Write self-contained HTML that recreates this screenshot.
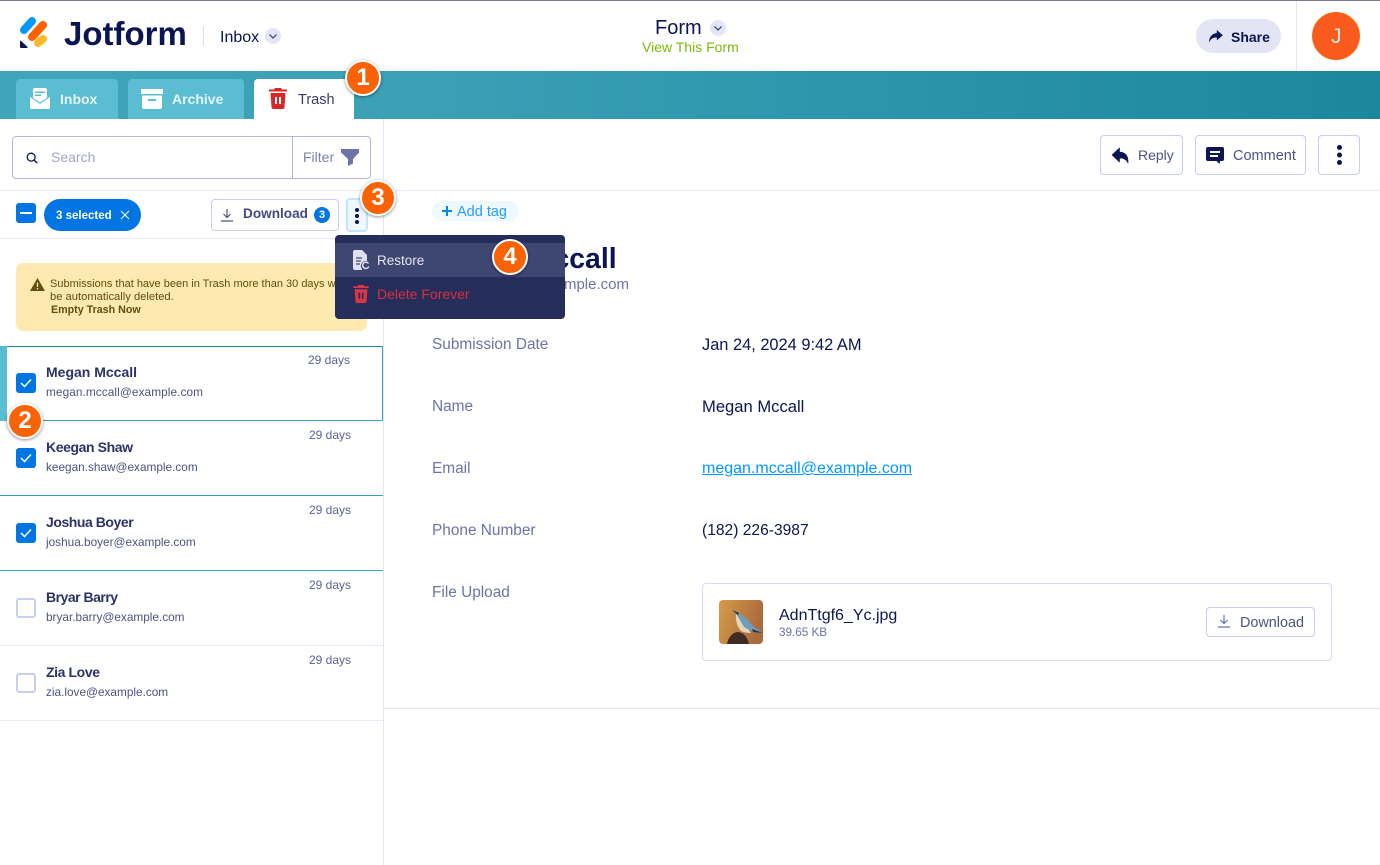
<!DOCTYPE html>
<html><head><meta charset="utf-8"><style>
*{box-sizing:border-box}
html,body{margin:0;padding:0;width:1380px;height:865px;overflow:hidden;background:#fff;font-family:"Liberation Sans",sans-serif;color:#0a1551}
.a{position:absolute}
.t{position:absolute;white-space:nowrap;line-height:1}
.badge{position:absolute;width:36px;height:36px;border-radius:50%;background:#f96205;border:2px solid #fff;box-shadow:0 1px 3px rgba(0,0,0,.45);color:#fff;font-size:24px;font-weight:bold;line-height:32px;text-align:center;z-index:20}
.cb{position:absolute;left:16px;width:20px;height:20px;border-radius:3px;background:#0075e3}
.cbe{position:absolute;left:16px;width:20px;height:20px;border-radius:3px;background:#fff;border:2px solid #c8ceed}
.name{position:absolute;left:46px;font-size:14px;font-weight:bold;color:#2b3366;white-space:nowrap;line-height:1}
.mail{position:absolute;left:46px;font-size:11.800px;color:#4c5381;white-space:nowrap;line-height:1}
.days{position:absolute;font-size:12px;color:#5b6394;white-space:nowrap;line-height:1}
.lab{position:absolute;left:432px;font-size:15.4px;color:#6c73a8;white-space:nowrap;line-height:1}
.val{position:absolute;left:702px;color:#0a1551;white-space:nowrap;line-height:1}
.btn{position:absolute;background:#fff;border:1px solid #c8ceed;border-radius:4px}
</style></head><body>
<div class="a" style="left:0;top:0;width:1380px;height:1px;background:#7a7890"></div>

<!-- logo -->
<svg class="a" style="left:16px;top:14px" width="36" height="36" viewBox="16 14 36 36">
<path d="M24 30L32 21" stroke="#0099ff" stroke-width="8" stroke-linecap="round"/>
<path d="M32 37L43 25" stroke="#ff6100" stroke-width="8" stroke-linecap="round"/>
<path d="M38 43L43 39" stroke="#ffb629" stroke-width="8" stroke-linecap="round"/>
<path d="M20 41.500Q20 40 21.200 41L27.500 47Q28 48 26.500 48H21Q20 48 20 47z" fill="#0a1551"/>
</svg>
<div class="t" style="left:64px;top:17px;font-size:33px;font-weight:bold;color:#0a1551">Jotform</div>
<div class="a" style="left:203px;top:26px;width:1px;height:20px;background:#dadef3"></div>
<div class="t" style="left:220px;top:30px;font-size:16px;color:#0a1551">Inbox</div>
<div class="a" style="left:265px;top:28px;width:16px;height:16px;border-radius:50%;background:#e3e5f5"></div>
<svg class="a" style="left:265px;top:28px" width="16" height="16"><path d="M4.500 6.500l3.500 3.500 3.500-3.500" fill="none" stroke="#343c6a" stroke-width="1.200"/></svg>

<div class="t" style="left:655px;top:18px;font-size:20px;color:#0a1551">Form</div>
<div class="a" style="left:710px;top:20px;width:16px;height:16px;border-radius:50%;background:#e3e5f5"></div>
<svg class="a" style="left:710px;top:20px" width="16" height="16"><path d="M4.500 6.500l3.500 3.500 3.500-3.500" fill="none" stroke="#343c6a" stroke-width="1.200"/></svg>
<div class="t" style="left:642px;top:40px;font-size:14px;color:#78bb07">View This Form</div>

<div class="a" style="left:1196px;top:19px;width:85px;height:34px;border-radius:17px;background:#e3e5f5"></div>
<svg class="a" style="left:1208px;top:30px" width="15" height="13" viewBox="0 0 17 15"><path d="M10 0l7 6-7 6V8.500C6 8.500 3 10 1 14.500 1 9 4 4 10 3.500z" fill="#0a1551"/></svg>
<div class="t" style="left:1231px;top:30px;font-size:14px;font-weight:bold;color:#0a1551">Share</div>
<div class="a" style="left:1296px;top:1px;width:1px;height:70px;background:#e3e5f5"></div>
<div class="a" style="left:1312px;top:12px;width:48px;height:48px;border-radius:50%;background:#fa5a1e;border:1px solid #ff6a10"></div>
<div class="t" style="left:1331px;top:26px;font-size:21px;color:#ffe9e0">J</div>

<!-- teal bar -->
<div class="a" style="left:0;top:71px;width:1380px;height:48px;background:linear-gradient(90deg,#40a5b9 0%,#3ca0b6 30%,#1b879f 100%)"></div>
<div class="a" style="left:16px;top:79px;width:102px;height:40px;background:#5abdd2;border-radius:4px 4px 0 0"></div>
<svg class="a" style="left:30px;top:88px" width="20" height="21" viewBox="0 0 20 21"><path d="M5 0h10a2 2 0 0 1 2 2v8l-7 4.500L3 10V2a2 2 0 0 1 2-2z" fill="#fff"/><path d="M0 9l10 7 10-7v10.500a1.500 1.500 0 0 1-1.500 1.500h-17A1.500 1.500 0 0 1 0 19.500z" fill="#fff"/><rect x="5" y="3.500" width="10" height="1.500" fill="#5abdd2"/><rect x="5" y="6.500" width="6" height="1.500" fill="#5abdd2"/></svg>
<div class="t" style="left:60px;top:92px;font-size:14px;font-weight:bold;color:#e4f4f8">Inbox</div>
<div class="a" style="left:128px;top:79px;width:116px;height:40px;background:#5abdd2;border-radius:4px 4px 0 0"></div>
<svg class="a" style="left:141px;top:89px" width="22" height="20" viewBox="0 0 22 20"><rect x="0" y="0" width="22" height="5" fill="#fff"/><path d="M1 6.500h20V18a2 2 0 0 1-2 2H3a2 2 0 0 1-2-2z" fill="#fff"/><rect x="7" y="10" width="8" height="2" fill="#5abdd2"/></svg>
<div class="t" style="left:172px;top:92px;font-size:14px;font-weight:bold;color:#e4f4f8">Archive</div>
<div class="a" style="left:254px;top:79px;width:100px;height:40px;background:#fff;border-radius:4px 4px 0 0"></div>
<svg class="a" style="left:269px;top:88px" width="18" height="21" viewBox="0 0 18 21"><path d="M6 0h6l1 1.500h5v2H0v-2h5z" fill="#dc2626"/><path d="M1.500 5h15l-1 14a2 2 0 0 1-2 2h-9a2 2 0 0 1-2-2z" fill="#dc2626"/><rect x="6" y="9" width="2" height="7" fill="#fff"/><rect x="10" y="9" width="2" height="7" fill="#fff"/></svg>
<div class="t" style="left:298px;top:93px;font-size:14.500px;color:#343c6a">Trash</div>

<!-- lines -->
<div class="a" style="left:383px;top:119px;width:1px;height:746px;background:#e3e5f5"></div>
<div class="a" style="left:0;top:190px;width:1380px;height:1px;background:#e8eaf5"></div>
<div class="a" style="left:0;top:238px;width:383px;height:1px;background:#e8eaf5"></div>
<div class="a" style="left:384px;top:708px;width:996px;height:1px;background:#e3e5f5"></div>

<!-- search -->
<div class="btn" style="left:12px;top:136px;width:359px;height:43px;border-color:#b3b7d6"></div>
<div class="a" style="left:292px;top:136px;width:1px;height:43px;background:#b3b7d6"></div>
<svg class="a" style="left:26px;top:152px" width="12" height="12" viewBox="0 0 14 14"><circle cx="6" cy="6" r="4.600" fill="none" stroke="#0a1551" stroke-width="1.500"/><path d="M9 9l4 4" stroke="#0a1551" stroke-width="1.700"/></svg>
<div class="t" style="left:51px;top:150px;font-size:14px;color:#a0a5c6">Search</div>
<div class="t" style="left:303px;top:150px;font-size:14px;color:#7c83ac">Filter</div>
<svg class="a" style="left:341px;top:149px" width="18" height="17" viewBox="0 0 18 17"><path d="M0 0h18v3.500L12 10v4.500L7 17V10L0 3.500z" fill="#6c73a8"/></svg>

<!-- selection bar -->
<div class="cb" style="top:203px"></div>
<div class="a" style="left:20px;top:212px;width:12px;height:2px;background:#fff"></div>
<div class="a" style="left:44px;top:199px;width:97px;height:32px;border-radius:16px;background:#0075e3"></div>
<div class="t" style="left:56px;top:210px;font-size:11.500px;font-weight:bold;color:#fff;transform:translateY(1px)">3 selected</div>
<svg class="a" style="left:120px;top:210px" width="10" height="10"><path d="M1 1l8 8M9 1L1 9" stroke="#fff" stroke-width="1"/></svg>
<div class="btn" style="left:211px;top:199px;width:128px;height:32px"></div>
<svg class="a" style="left:221px;top:209px" width="12" height="13" viewBox="0 0 12 13"><path d="M6 0v8M2.500 5L6 8.500 9.500 5M0 12h12" fill="none" stroke="#4c5381" stroke-width="1.200"/></svg>
<div class="t" style="left:243px;top:207px;font-size:13.600px;font-weight:bold;color:#434a7e">Download</div>
<div class="a" style="left:314px;top:207px;width:16px;height:16px;border-radius:50%;background:#0075e3;color:#fff;font-size:11px;font-weight:bold;line-height:16px;text-align:center">3</div>
<div class="a" style="left:346px;top:198px;width:22px;height:34px;border-radius:4px;background:#edf8ff;border:2px solid #c4e5fb"></div>
<div class="a" style="left:355px;top:208px;width:4px;height:4px;border-radius:50%;background:#0a1551;box-shadow:0 6px 0 #0a1551,0 12px 0 #0a1551"></div>

<!-- warning -->
<div class="a" style="left:16px;top:263px;width:351px;height:68px;border-radius:7px;background:#fee9ae"></div>
<svg class="a" style="left:30px;top:278px" width="15" height="13" viewBox="0 0 15 13"><path d="M7.500 0L15 13H0z" fill="#5f4f10"/><rect x="6.800" y="4.500" width="1.400" height="4.500" fill="#fee9ae"/><rect x="6.800" y="10" width="1.400" height="1.400" fill="#fee9ae"/></svg>
<div class="a" style="left:50px;top:278px;width:290px;height:14px;overflow:hidden;font-size:11px;line-height:13px;color:#5f4f10;white-space:nowrap">Submissions that have been in Trash more than 30 days will</div>
<div class="t" style="left:50px;top:292px;font-size:11.200px;color:#5f4f10">be automatically deleted.</div>
<div class="t" style="left:51px;top:305px;font-size:10.700px;font-weight:bold;color:#5f4f10">Empty Trash Now</div>

<!-- list -->
<div class="a" style="left:0;top:346px;width:383px;height:75px;border:1px solid #35a8bc;border-top-color:#13899d"></div>
<div class="a" style="left:0;top:346px;width:7px;height:75px;background:#5abdd2"></div>
<div class="a" style="left:0;top:495px;width:383px;height:1px;background:#3d9fb5"></div>
<div class="a" style="left:0;top:570px;width:383px;height:1px;background:#35a8bc"></div>
<div class="a" style="left:0;top:645px;width:383px;height:1px;background:#e8eaf5"></div>
<div class="a" style="left:0;top:720px;width:383px;height:1px;background:#e8eaf5"></div>

<div class="cb" style="top:373px"></div><svg class="a" style="left:20px;top:378px" width="12" height="10"><path d="M1 5l3.500 3.500L11 1.500" fill="none" stroke="#fff" stroke-width="1.500"/></svg>
<div class="name" style="top:365px">Megan Mccall</div><div class="mail" style="top:387px;letter-spacing:.09px">megan.mccall@example.com</div><div class="days" style="left:308px;top:354px">29 days</div>

<div class="cb" style="top:448px"></div><svg class="a" style="left:20px;top:453px" width="12" height="10"><path d="M1 5l3.500 3.500L11 1.500" fill="none" stroke="#fff" stroke-width="1.500"/></svg>
<div class="name" style="top:440px;letter-spacing:-.4px">Keegan Shaw</div><div class="mail" style="top:462px">keegan.shaw@example.com</div><div class="days" style="left:309px;top:429px">29 days</div>

<div class="cb" style="top:523px"></div><svg class="a" style="left:20px;top:528px" width="12" height="10"><path d="M1 5l3.500 3.500L11 1.500" fill="none" stroke="#fff" stroke-width="1.500"/></svg>
<div class="name" style="top:515px;letter-spacing:-.45px">Joshua Boyer</div><div class="mail" style="top:537px">joshua.boyer@example.com</div><div class="days" style="left:309px;top:504px">29 days</div>

<div class="cbe" style="top:598px"></div>
<div class="name" style="top:590px;letter-spacing:-.5px">Bryar Barry</div><div class="mail" style="top:612px">bryar.barry@example.com</div><div class="days" style="left:309px;top:579px">29 days</div>

<div class="cbe" style="top:673px"></div>
<div class="name" style="top:665px;letter-spacing:-.4px">Zia Love</div><div class="mail" style="top:687px">zia.love@example.com</div><div class="days" style="left:309px;top:654px">29 days</div>

<!-- top right actions -->
<div class="btn" style="left:1100px;top:135px;width:83px;height:40px"></div>
<svg class="a" style="left:1112px;top:147px" width="17" height="17" viewBox="0 0 17 17"><path d="M7.500 1v4C13 5 16.500 8.500 16 16c-1.500-3.500-4-5-8.500-5v4L0 8z" fill="#0a1551" stroke="#0a1551" stroke-width=".6" stroke-linejoin="round"/></svg>
<div class="t" style="left:1138px;top:148px;font-size:14px;color:#4c5381">Reply</div>
<div class="btn" style="left:1195px;top:135px;width:111px;height:40px"></div>
<svg class="a" style="left:1206px;top:147px" width="18" height="17" viewBox="0 0 18 17"><path d="M2 0h14a2 2 0 0 1 2 2v10a2 2 0 0 1-2 2h-2l-.5 3-3-3H2a2 2 0 0 1-2-2V2a2 2 0 0 1 2-2z" fill="#0a1551"/><rect x="4" y="4" width="10" height="2" fill="#fff"/><rect x="4" y="8" width="8" height="2" fill="#fff"/></svg>
<div class="t" style="left:1233px;top:149px;font-size:14.500px;color:#4c5381">Comment</div>
<div class="btn" style="left:1318px;top:135px;width:42px;height:40px"></div>
<div class="a" style="left:1337px;top:145px;width:5px;height:5px;border-radius:50%;background:#0a1551;box-shadow:0 7.500px 0 #0a1551,0 15px 0 #0a1551"></div>

<!-- detail -->
<div class="a" style="left:432px;top:201px;width:87px;height:20px;border-radius:10px;background:#edf8ff"></div>
<svg class="a" style="left:441px;top:205px" width="12" height="12"><path d="M6 1v10M1 6h10" stroke="#0085e8" stroke-width="2"/></svg>
<div class="t" style="left:457px;top:205px;font-size:14.500px;color:#2a9df4">Add tag</div>
<div class="t" style="left:432px;top:245px;font-size:28.400px;font-weight:bold;color:#0a1551">Megan Mccall</div>
<div class="t" style="left:432px;top:277px;font-size:15px;color:#6c73a8">megan.mccall@example.com</div>

<div class="lab" style="top:337px">Submission Date</div><div class="val" style="top:337px;font-size:16.400px">Jan 24, 2024 9:42 AM</div>
<div class="lab" style="top:399px">Name</div><div class="val" style="top:399px;font-size:16.600px">Megan Mccall</div>
<div class="lab" style="top:461px">Email</div><div class="val" style="top:461px;font-size:16px;color:#0099ff;text-decoration:underline">megan.mccall@example.com</div>
<div class="lab" style="top:523px">Phone Number</div><div class="val" style="top:523px;font-size:15.600px">(182) 226-3987</div>
<div class="lab" style="top:585px">File Upload</div>

<div class="a" style="left:702px;top:583px;width:630px;height:78px;border:1px solid #d5dbef;border-radius:4px"></div>
<svg class="a" style="left:719px;top:600px" width="44" height="44" viewBox="0 0 44 44">
<defs><linearGradient id="bg" x1="0" y1="0" x2="1" y2="0.300"><stop offset="0" stop-color="#d69c48"/><stop offset="1" stop-color="#ab6a3e"/></linearGradient><clipPath id="c"><rect width="44" height="44" rx="4"/></clipPath></defs>
<g clip-path="url(#c)"><rect width="44" height="44" fill="url(#bg)"/>
<path d="M8 44 Q10 34 18 32 Q27 32 30 44 Z" fill="#3f2b22"/>
<path d="M17 14 Q16 24 22 31 Q26 33 32 33 L24 22 Z" fill="#e6d5b8"/>
<path d="M13 10 L20 13 L28 19 L35 27 L44 33 L32 31 L25 27 Q21 20 18 15 Z" fill="#6e9cc0"/>
<path d="M13 10 L20 13 L19 15 Z" fill="#253040"/>
<path d="M33 29 L44 33 L34 32 Z" fill="#2b3545"/></g></svg>
<div class="t" style="left:779px;top:608px;font-size:16px;color:#0a1551">AdnTtgf6_Yc.jpg</div>
<div class="t" style="left:779px;top:627px;font-size:11.700px;color:#6c73a8">39.65 KB</div>
<div class="btn" style="left:1206px;top:607px;width:109px;height:30px"></div>
<svg class="a" style="left:1218px;top:615px" width="12" height="13" viewBox="0 0 12 13"><path d="M6 0v8M2.500 5L6 8.500 9.500 5M0 12h12" fill="none" stroke="#6c73a8" stroke-width="1.200"/></svg>
<div class="t" style="left:1240px;top:616px;font-size:14.400px;color:#4c5381">Download</div>

<!-- dropdown -->
<div class="a" style="left:335px;top:235px;width:230px;height:84px;background:#252d5b;border-radius:4px;z-index:10"></div>
<div class="a" style="left:335px;top:243px;width:230px;height:34px;background:#3e4672;z-index:10"></div>
<svg class="a" style="left:353px;top:250px;z-index:11" width="17" height="20" viewBox="0 0 17 20"><path d="M2 0h7l5 5v6a5 5 0 0 0-5 8v1H2a2 2 0 0 1-2-2V2a2 2 0 0 1 2-2z" fill="#dfe1ee"/><path d="M3 8h6M3 11h5M3 14h4" stroke="#3e4672" stroke-width="1.300"/><path d="M15.500 13.500a3.200 3.200 0 1 0 .3 3" fill="none" stroke="#dfe1ee" stroke-width="1.500"/></svg>
<div class="t" style="left:377px;top:254px;font-size:13.500px;color:#e3e5f0;z-index:11">Restore</div>
<svg class="a" style="left:353px;top:285px;z-index:11" width="16" height="18" viewBox="0 0 18 21"><path d="M6 0h6l1 1.500h5v2H0v-2h5z" fill="#dc3545"/><path d="M1.500 5h15l-1 14a2 2 0 0 1-2 2h-9a2 2 0 0 1-2-2z" fill="#dc3545"/><rect x="6" y="9" width="2" height="7" fill="#252d5b"/><rect x="10" y="9" width="2" height="7" fill="#252d5b"/></svg>
<div class="t" style="left:377px;top:287px;font-size:14px;color:#d5303f;z-index:11">Delete Forever</div>

<div class="badge" style="left:345px;top:60px">1</div>
<div class="badge" style="left:7px;top:403px">2</div>
<div class="badge" style="left:360px;top:180px">3</div>
<div class="badge" style="left:492px;top:239px">4</div>
</body></html>
